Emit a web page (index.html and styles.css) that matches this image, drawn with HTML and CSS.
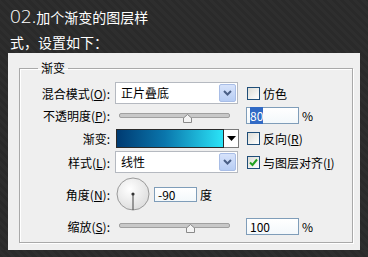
FILE: index.html
```html
<!DOCTYPE html>
<html lang="zh-CN">
<head>
  <meta charset="UTF-8" />
  <title>渐变叠加</title>
  <link rel="stylesheet" href="styles.css">
</head>
<body>
  <div class="title">
    <p class="title-line"><span class="step">02.</span>加个渐变的图层样</p>
    <p class="title-line">式，设置如下：</p>
  </div>

  <div class="panel">
    <fieldset class="group">
      <legend>渐变</legend>
      <div class="form">
        <label class="lbl">混合模式(<u>O</u>):</label>
        <div class="select">
          <span class="select-text">正片叠底</span>
          <span class="drop">
            <svg width="9" height="6" viewBox="0 0 9 6"><path d="M1 1 L4.5 4.5 L8 1" fill="none" stroke="#4a5f86" stroke-width="2"/></svg>
          </span>
        </div>
        <div class="check"><span class="box"></span>仿色</div>

        <label class="lbl">不透明度(<u>P</u>):</label>
        <div class="slider">
          <span class="track"></span>
          <span class="thumb" style="left: 58%">
            <svg width="9" height="9" viewBox="0 0 9 9"><path d="M0.5 8.5 L0.5 4 L4.5 0.5 L8.5 4 L8.5 8.5 Z" fill="#f4f4f4" stroke="#8a8a8a"/></svg>
          </span>
        </div>
        <div class="num-row"><span class="field"><span class="picked">80</span></span><span class="unit">%</span></div>

        <label class="lbl">渐变:</label>
        <div class="gradient">
          <span class="swatch"></span>
          <span class="grad-drop">
            <svg width="9" height="5" viewBox="0 0 9 5"><path d="M0 0 L9 0 L4.5 5 Z" fill="#000"/></svg>
          </span>
        </div>
        <div class="check"><span class="box"></span>反向(<u>R</u>)</div>

        <label class="lbl">样式(<u>L</u>):</label>
        <div class="select">
          <span class="select-text">线性</span>
          <span class="drop">
            <svg width="9" height="6" viewBox="0 0 9 6"><path d="M1 1 L4.5 4.5 L8 1" fill="none" stroke="#4a5f86" stroke-width="2"/></svg>
          </span>
        </div>
        <div class="check">
          <span class="box">
            <svg width="9" height="9" viewBox="0 0 9 9"><path d="M1 4.5 L3.5 7 L8 1.5" fill="none" stroke="#21a121" stroke-width="2"/></svg>
          </span>与图层对齐(<u>I</u>)
        </div>

        <label class="lbl">角度(<u>N</u>):</label>
        <div class="angle">
          <svg class="dial" width="34" height="34" viewBox="0 0 34 34">
            <defs>
              <radialGradient id="dialFill" cx="40%" cy="35%" r="70%">
                <stop offset="0" stop-color="#ffffff"/>
                <stop offset="1" stop-color="#dcdcdc"/>
              </radialGradient>
            </defs>
            <circle cx="17" cy="17" r="16" fill="url(#dialFill)" stroke="#9a9a9a"/>
            <line x1="17" y1="17" x2="17" y2="33" stroke="#444" stroke-width="1"/>
            <circle cx="17" cy="17" r="1.6" fill="#333"/>
          </svg>
          <span class="field small">-90</span>
          <span class="unit">度</span>
        </div>
        <span></span>

        <label class="lbl">缩放(<u>S</u>):</label>
        <div class="slider">
          <span class="track"></span>
          <span class="thumb" style="left: 60%">
            <svg width="9" height="9" viewBox="0 0 9 9"><path d="M0.5 8.5 L0.5 4 L4.5 0.5 L8.5 4 L8.5 8.5 Z" fill="#f4f4f4" stroke="#8a8a8a"/></svg>
          </span>
        </div>
        <div class="num-row"><span class="field">100</span><span class="unit">%</span></div>
      </div>
    </fieldset>
  </div>
</body>
</html>
```

FILE: styles.css
```css
body {
  margin: 0;
  background-color: #2a2a2a;
  background-image: repeating-linear-gradient(45deg, rgba(255, 255, 255, 0.02) 0 3px, transparent 3px 6px);
  font-family: "Noto Sans CJK SC", "Noto Sans", sans-serif;
}

.title {
  height: 53px;
  padding: 3px 10px 0;
  box-sizing: border-box;
  color: #ffffff;
}

.title-line {
  margin: 0;
  font-size: 14px;
  line-height: 26px;
}

.title-line + .title-line {
  line-height: 24px;
}

.step {
  font-family: "Open Sans", sans-serif;
  font-weight: 300;
  font-size: 19px;
}

.panel {
  margin: 0 8px 0 8px;
  width: 352px;
  height: 197px;
  padding: 7px 7px 0 11px;
  box-sizing: border-box;
  background-color: #efefef;
  font-size: 12px;
  color: #000;
}

.group {
  margin: 0;
  padding: 6px 0 4px 0;
  border: 1px solid #a9a9a9;
  box-shadow: inset 1px 1px 0 #ffffff, 1px 1px 0 #ffffff;
}

.group legend {
  margin-left: 18px;
  padding: 0 3px;
  line-height: 16px;
}

.form {
  display: grid;
  grid-template-columns: 95px 132px 1fr;
  grid-template-rows: 22px 23px 23px 24px 40px 24px;
  align-items: center;
}

.lbl {
  text-align: right;
  padding-right: 5px;
  white-space: nowrap;
}

.select {
  display: flex;
  width: 123px;
  height: 22px;
  box-sizing: border-box;
  border: 1px solid #b5b9c0;
  background: #ffffff;
}

.select-text {
  flex: 1;
  padding-left: 5px;
  line-height: 20px;
}

.drop {
  display: flex;
  justify-content: center;
  align-items: center;
  width: 15px;
  margin: 1px;
  border: 1px solid #a8bde6;
  border-radius: 2px;
  background: linear-gradient(#d7e3fb, #b7cdf4);
}

.check {
  display: flex;
  align-items: center;
  white-space: nowrap;
}

.box {
  display: flex;
  justify-content: center;
  align-items: center;
  width: 13px;
  height: 13px;
  margin-right: 3px;
  box-sizing: border-box;
  border: 1px solid #1f4e79;
  background: linear-gradient(135deg, #dcdcd6, #ffffff);
}

.slider {
  position: relative;
  width: 111px;
  height: 14px;
  margin-left: 4px;
}

.track {
  display: block;
  margin-top: 4px;
  height: 3px;
  border: 1px solid #a0a0a0;
  border-radius: 2px;
  background: #c8c8c8;
}

.thumb {
  position: absolute;
  top: 5px;
  line-height: 0;
}

.num-row {
  display: flex;
  align-items: center;
}

.field {
  display: block;
  width: 53px;
  height: 17px;
  margin-left: -1px;
  padding-left: 3px;
  box-sizing: border-box;
  border: 1px solid #7f9db9;
  background: linear-gradient(#ffffff, #f3f8fb);
  line-height: 15px;
}

.field.small {
  width: 43px;
  height: 15px;
  margin-left: 4px;
  line-height: 13px;
}

.picked {
  background: #316ac5;
  color: #ffffff;
}

.unit {
  margin-left: 3px;
}

.gradient {
  display: flex;
  width: 123px;
  height: 19px;
  margin-left: 1px;
}

.swatch {
  flex: 1;
  border: 1px solid #2a2a2a;
  background: linear-gradient(to right, #003b72, #0a76ac 45%, #2be4f7);
}

.grad-drop {
  display: flex;
  justify-content: center;
  align-items: center;
  width: 14px;
  border: 1px solid #7a7a7a;
  border-left: none;
  background: #ffffff;
}

.angle {
  display: flex;
  align-items: center;
  margin-left: 1px;
}

.dial {
  display: block;
}
```
